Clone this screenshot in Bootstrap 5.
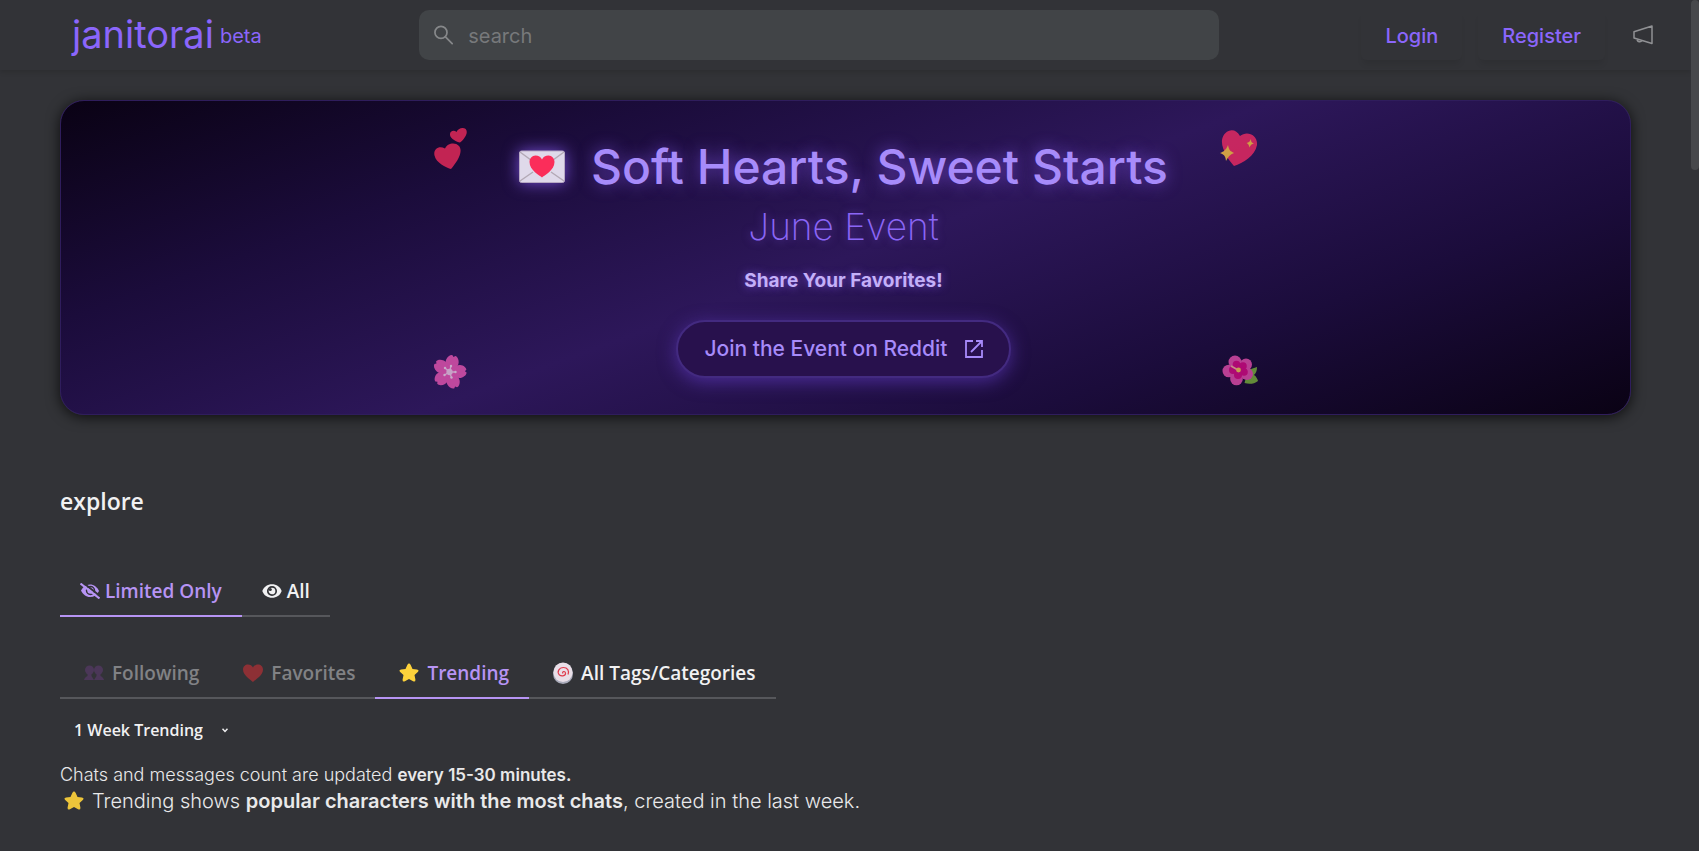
<!DOCTYPE html>
<html lang="en" data-bs-theme="dark">
<head>
<meta charset="utf-8">
<meta name="viewport" content="width=device-width, initial-scale=1">
<title>janitorai</title>
<link rel="stylesheet" href="https://cdn.jsdelivr.net/npm/bootstrap@5.3.0/dist/css/bootstrap.min.css">
<style>
  body { background: #323337; color: #e9e9ea; font-family: Inter, "Liberation Sans", sans-serif; height: 100vh; overflow: hidden; }
  .page-scroll { width: 8px; height: 170px; top: 0; right: 0; background: #47484b; border-radius: 4px; }
  .page-body { margin-right: 8px; }
  .site-head { height: 70px; padding: 0 38px 0 72px; box-shadow: 0 2px 5px rgba(0,0,0,.14); }
  .side-start { flex: 4 1 0; }
  .side-end { flex: 5 1 0; }
  .brand { color: #8b66fb; font-size: 38px; line-height: 48px; padding-bottom: 2px; font-weight: 400; gap: 6px; }
  .brand small { font-size: 20px; line-height: 28px; padding-top: 4px; }
  .search-box { width: 800px; flex: 0 1 800px; height: 50px; background: #414447; border-radius: 10px; padding: 0 15px; gap: 15px; color: #86888a; }
  .search-box input { background: none; border: 0; padding: 2px 0 0; font-size: 20px; color: inherit; box-shadow: none; }
  .search-box input:focus { background: none; box-shadow: none; color: #ddd; }
  .search-box input::placeholder { color: #77797b; }
  .auth-btn { color: #8b66fb; font-size: 20px; font-weight: 500; line-height: 28px; padding: 12px 24px 10px; border: 0; border-radius: 6px; box-shadow: 0 6px 6px -2px rgba(0,0,0,.09); }
  .auth-btn:hover { color: #a58afd; }
  .wrap { padding: 30px 60px 0; }
  .promo { border-radius: 24px; border: 1px solid #2f1d5c; padding: 26px 0 24px; box-shadow: 0 2px 14px rgba(0,0,0,.75);
    background: linear-gradient(160deg, #0a0214 0%, #1b0c3b 25%, #2d175a 50%, #1b0c3b 75%, #0a0214 100%); }
  .promo-inner { max-width: 826px; }
  .promo h1 { font-size: 48px; line-height: 60px; font-weight: 500; color: #a78bfa; text-shadow: 0 0 16px rgba(139,92,246,.65); gap: 26px; white-space: nowrap; }
  .promo h1 svg { filter: drop-shadow(0 0 8px rgba(139,92,246,.8)); }
  .promo h2 { font-size: 37px; line-height: 44px; font-weight: 200; color: #8b66f6; text-shadow: 0 0 8px rgba(139,92,246,.5); }
  .promo p { font-size: 19px; line-height: 28px; font-weight: 700; color: #c4b0f8; text-shadow: 0 0 8px rgba(139,92,246,.7); margin: 18px 0 25px; }
  .promo-copy { padding: 10px 0 12px; }
  .join { font-size: 21px; line-height: 30px; font-weight: 500; color: #a78bfa; padding: 12px 26px; gap: 17px; border: 2px solid #432a80; border-radius: 29px; background: #28114d; box-shadow: 0 4px 18px rgba(109,68,220,.5); }
  .join:hover { color: #c4b0f8; border-color: #6b46c1; }
  .soft { opacity: .78; }
  .seg { font-family: "Open Sans", "Noto Sans", sans-serif; }
  .explore { font-size: 23px; line-height: 32px; font-weight: 600; color: #f1f1f2; margin: 70px 0 51px; }
  .tabset { border-bottom: 2px solid #56575b; width: max-content; }
  .tabset .nav-link { color: #f1f1f2; background: none; font-size: 19px; line-height: 28px; font-weight: 600; padding: 9px 20px 10px; border: 0; border-bottom: 2px solid transparent; border-radius: 0; margin-bottom: -2px; gap: 5px; }
  .tabset .nav-link.active { color: #b794f4; border-bottom-color: #b794f4; }
  .tabset .nav-link:disabled { color: #818285; }
  .tags { margin: 33px 0 18px; }
  .tags .nav-link { gap: 8px; padding-left: 24px; }
  .period { font-size: 16px; line-height: 26px; font-weight: 600; color: #f1f1f2; background: none; border: 0; appearance: none; padding: 0 30px 0 14px; }
  .period option { color: #222; }
  .period-box svg { margin-left: -11px; pointer-events: none; }
  .note { font-size: 18px; line-height: 26px; font-weight: 300; margin-top: 19px; }
  .note b { font-size: 17px; }
  .note-lg { font-size: 20px; line-height: 26px; font-weight: 300; gap: 8px; padding-left: 4px; }
  .note b, .note-lg b { font-weight: 600; }
</style>
</head>
<body>
<svg width="0" height="0" class="position-absolute" aria-hidden="true">
  <defs>
    <symbol id="star" viewBox="0 0 20 20"><path d="M8.3 1.9q1.700-2.900 3.400 0l1.800 4 4.400.5q2.700.5.900 2.600l-3.300 3.100.9 4.500q.2 2.700-2.300 1.700L10 16l-4.100 2.300q-2.500 1-2.300-1.700l.9-4.500L1.200 9Q-.6 6.900 2.100 6.400l4.400-.5z" fill="#fdd23b"/></symbol>
    <symbol id="heart" viewBox="0 0 20 20"><path d="M10 19C8 17 0 12.500 0 6.500 0 3.500 2.300 1.500 5 1.500c2.200 0 4 1.200 5 3 1-1.800 2.800-3 5-3 2.700 0 5 2 5 5C20 12.500 12 17 10 19z" fill="currentColor"/></symbol>
  </defs>
</svg>
<div class="page-scroll position-fixed" aria-hidden="true"></div>
<div class="page-body">
  <header class="site-head d-flex align-items-center">
    <div class="side-start"><a class="brand text-decoration-none d-inline-flex align-items-center" href="#"><span>janitorai</span><small>beta</small></a></div>
    <label class="search-box d-flex align-items-center">
      <svg width="20" height="20" viewBox="0 0 20 20" fill="none" stroke="currentColor" stroke-width="1.800" stroke-linecap="round"><circle cx="7.300" cy="7.300" r="6.300"/><path d="M12 12l7 7"/></svg>
      <input class="form-control" type="text" placeholder="search" aria-label="search">
    </label>
    <div class="side-end d-flex align-items-center justify-content-end">
      <button class="btn auth-btn" type="button">Login</button>
      <button class="btn auth-btn ms-3 me-4" type="button">Register</button>
      <a href="#" aria-label="Announcements" class="d-flex ms-1"><svg width="20" height="20" viewBox="0 0 20 20" fill="none" stroke="#909194" stroke-width="1.500" stroke-linejoin="round"><path d="M1 6.800L19 1v17.500L1 13zM4 14c.3 3.600 4.300 3.400 4.700 1.300"/></svg></a>
    </div>
  </header>
  <main class="wrap">
    <section class="promo">
      <div class="promo-inner mx-auto d-flex justify-content-between">
        <div class="soft d-flex flex-column justify-content-between">
          <svg width="34" height="44" viewBox="0 0 34 44" fill="#f22c5c"><path d="M18 42C14 41 3 36 1.500 28.500 0 22 6 18 12 21.500 14 16.500 22 14.500 26 19c5 6-3 17-8 23zM27 15.500C24 15 17.500 12 17 8c-.5-4 4-5.500 6.500-3C24.500 1.500 30-.5 32.700 2c3.500 4-2.400 11-5.700 13.500z"/></svg>
          <svg width="34" height="36" viewBox="0 0 34 36"><g fill="#e857b2" transform="translate(16.500 18) rotate(15)"><g id="petal"><path d="M0 0C-3-2-7-6-6.500-11-6-14.500-3.500-17-1.500-17L0-15.500 1.500-17C3.500-17 6-14.500 6.500-11 7-6 3-2 0 0z"/></g><use href="#petal" transform="rotate(72)"/><use href="#petal" transform="rotate(144)"/><use href="#petal" transform="rotate(216)"/><use href="#petal" transform="rotate(288)"/></g><g stroke="#f3c9e6" stroke-width="1.300" fill="#f3d5ea"><circle cx="16.500" cy="18" r="2.500"/><path d="M16.500 18l1.500-6M16.500 18l6 0M16.500 18l2 5.500M16.500 18l-5 3M16.500 18l-4.500-4"/><g stroke="none"><circle cx="18" cy="12" r="1.200"/><circle cx="22.500" cy="18" r="1.200"/><circle cx="18.500" cy="23.500" r="1.200"/><circle cx="11.500" cy="21" r="1.200"/><circle cx="12" cy="14" r="1.200"/></g></g></svg>
        </div>
        <div class="promo-copy d-flex flex-column align-items-center">
          <h1 class="d-flex align-items-center mb-2"><svg width="46" height="34" viewBox="0 0 46 34"><rect x=".5" y="1" width="45" height="31.500" rx="2" fill="#dfd9ea" stroke="#b7a9c4"/><path d="M1 2l15 11M45 2L30 13M1 31l13-9M45 31l-13-9" stroke="#b3a9b6" stroke-width="1.500"/><path d="M23 27.500c-2-2-12.500-7-12.500-15.500C10.500 8.500 13 5.500 16.500 5.500c3 0 5.300 1.500 6.500 4 1.200-2.500 3.500-4 6.500-4 3.500 0 6 3 6 6.500C35.500 20.500 25 25.500 23 27.500z" fill="#fb2d5a"/></svg><span>Soft Hearts, Sweet Starts</span></h1>
          <h2 class="mb-0">June Event</h2>
          <p>Share Your Favorites!</p>
          <a class="btn join d-inline-flex align-items-center" href="#">Join the Event on Reddit<svg width="18" height="18" viewBox="0 0 18 18" fill="none" stroke="currentColor" stroke-width="1.800"><path d="M8 1H1v16h16v-7M11 1h6v6M17 1L6 12"/></svg></a>
        </div>
        <div class="soft d-flex flex-column justify-content-between align-items-end">
          <svg width="38" height="42" viewBox="0 0 38 42"><path d="M14 39C9 34 1 22 2 13 3.500 3 15-1 20 9c7-6 18-1 17 9-2 11-14 18-23 21z" fill="#f22c63"/><path d="M8 18c1 5 2 6 6 8-4 1.500-6 4-8 8-.5-4-1-6-6-8 4-1.500 6-3 8-8zM31 12c0 3 .5 3.500 3 4.500-2.500.5-3.500 1.500-4.500 4-.5-2.500-1-3.500-3-4.500 2.500-.5 3.500-1.500 4.500-4z" fill="#fdc741"/></svg>
          <svg width="36" height="36" viewBox="0 0 36 36"><path d="M26 16l9-3c0 4-1 6-3 8 2 1 3.500 4 4 6-4 3-8.500 3.500-13.500 2z" fill="#79b03c"/><g fill="#e64fae"><circle cx="13" cy="8" r="6.500"/><circle cx="24" cy="10.500" r="6"/><circle cx="25" cy="20" r="6"/><circle cx="14.500" cy="25" r="6.300"/><circle cx="6.800" cy="17" r="6.300"/><circle cx="16" cy="16" r="9"/></g><g fill="#d80a86"><circle cx="14.500" cy="10.500" r="3.800"/><circle cx="21" cy="12" r="3.800"/><circle cx="22" cy="18" r="3.800"/><circle cx="16" cy="21" r="4"/><circle cx="11" cy="16" r="4"/><circle cx="16.500" cy="16" r="5"/></g><path d="M9 12l7 4" stroke="#f5b2a0" stroke-width="1.800"/><circle cx="16.500" cy="16" r="2.400" fill="#f8c55b"/></svg>
        </div>
      </div>
    </section>

    <div class="seg">
      <h3 class="explore">explore</h3>
      <div class="nav tabset">
        <button type="button" class="nav-link active d-flex align-items-center"><svg width="20" height="16" viewBox="0 0 20 16" fill="none"><path d="M1 7.500C3 3.500 6 1.500 10 1.500s7 2.500 9 6.500c-2 4-5 6-9 6s-7-2.500-9-6.500z" fill="currentColor"/><circle cx="10.500" cy="7.500" r="4" stroke="#323337" stroke-width="1.500"/><path d="M1.500-1.500L20 13" stroke="#323337" stroke-width="2"/><path d="M.5.5l19 15" stroke="currentColor" stroke-width="2"/></svg>Limited Only</button>
        <button type="button" class="nav-link d-flex align-items-center"><svg width="20" height="16" viewBox="0 0 20 16"><path d="M.3 8C2 3.500 5.500 1.200 10 1.200S18 3.500 19.700 8C18 12.500 14.500 14.800 10 14.800S2 12.500.3 8z" fill="currentColor"/><circle cx="10" cy="8" r="4.200" fill="none" stroke="#323337" stroke-width="1.700"/><circle cx="8.300" cy="6.500" r="1.500" fill="#323337"/></svg>All</button>
      </div>
      <div class="nav tabset tags">
        <button type="button" class="nav-link d-flex align-items-center" disabled><svg width="20" height="18" viewBox="0 0 20 18" fill="#4b3758"><circle cx="5.500" cy="6" r="4.500"/><circle cx="14.500" cy="6" r="4.500"/><path d="M3.500 8h4v4l2.500 4 2.500-4V8h4v4c2 1 3 2 3.500 4H0c.5-2 1.500-3 3.500-4z"/></svg>Following</button>
        <button type="button" class="nav-link d-flex align-items-center" disabled><svg width="20" height="20" color="#8d3035"><use href="#heart"/></svg>Favorites</button>
        <button type="button" class="nav-link active d-flex align-items-center"><svg width="20" height="20"><use href="#star"/></svg>Trending</button>
        <button type="button" class="nav-link d-flex align-items-center"><svg width="20" height="22" viewBox="0 0 20 22"><ellipse cx="10" cy="11.500" rx="10" ry="10.500" fill="#a9abba"/><ellipse cx="10" cy="10.300" rx="9.500" ry="9.800" fill="#e9dfe8"/><path d="M10 11.500c-1.500-2 2-3 2.500-.5s-3.500 4-6 2C3.500 10 6 5.500 10.500 5.500c4 0 6 3.500 4.500 7" fill="none" stroke="#df3b4c" stroke-width="1.200"/></svg>All Tags/Categories</button>
      </div>
      <div class="period-box d-flex align-items-center">
        <select class="period seg" aria-label="Trending period"><option>1 Week Trending</option></select>
        <svg width="6" height="5" viewBox="0 0 6 5" fill="none" stroke="#f1f1f2" stroke-width="1.500"><path d="M.5.8L3 3.500 5.500.8"/></svg>
      </div>
    </div>
    <div class="note">Chats and messages count are updated <b>every 15-30 minutes.</b></div>
    <div class="note-lg d-flex align-items-center"><svg width="20" height="20" opacity=".92"><use href="#star"/></svg><span>Trending shows <b>popular characters with the most chats</b>, created in the last week.</span></div>
  </main>
</div>
<script src="https://cdn.jsdelivr.net/npm/bootstrap@5.3.0/dist/js/bootstrap.bundle.min.js"></script>
</body>
</html>
